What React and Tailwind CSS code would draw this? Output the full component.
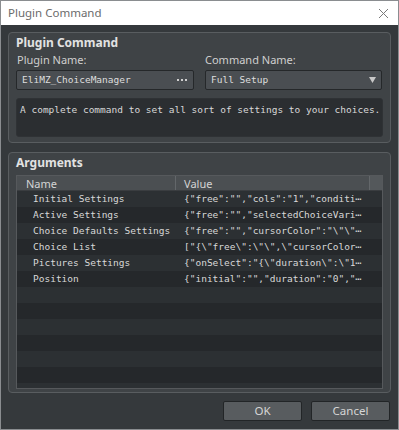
import React from 'react';

const mono = { fontFamily: '"DejaVu Sans Mono", "Liberation Mono", monospace' };

const args = [
  ['Initial Settings', '{"free":"","cols":"1","conditi⋯'],
  ['Active Settings', '{"free":"","selectedChoiceVari⋯'],
  ['Choice Defaults Settings', '{"free":"","cursorColor":"\\"\\"⋯'],
  ['Choice List', '["{\\"free\\":\\"\\",\\"cursorColor⋯'],
  ['Pictures Settings', '{"onSelect":"{\\"duration\\":\\"1⋯'],
  ['Position', '{"initial":"","duration":"0","⋯'],
];

const TOTAL_ROWS = 13;

const App = () => {
  const rows = Array.from({ length: TOTAL_ROWS }, (_, i) => args[i] || ['', '']);

  return (
    <div className="w-[399px] h-[430px] flex flex-col bg-[#35393c] font-['Noto_Sans',sans-serif] overflow-hidden border border-[#8a8d90]">
      {/* title bar */}
      <div className="h-[24px] bg-white flex items-center justify-between pl-[7px] pr-[8px] shrink-0">
        <span className="text-[11.5px] text-[#6b6b6b]">Plugin Command</span>
        <svg width="11" height="11" viewBox="0 0 11 11" className="mr-[1px]">
          <path d="M1 1 L10 10 M10 1 L1 10" stroke="#7a7a7a" strokeWidth="1" />
        </svg>
      </div>

      <div className="flex-1 flex flex-col px-[7px] pt-[7px]">
        {/* Plugin Command group */}
        <div className="h-[111px] rounded-[4px] border border-[#595d60] bg-[#3f4346] px-[7px] pt-[2px] flex flex-col">
          <div className="text-[12px] font-bold text-[#e2e2e2] leading-[16px]">Plugin Command</div>
          <div className="flex gap-[11px] mt-[2px]">
            <div className="w-[178px] flex flex-col">
              <span className="text-[11px] text-[#cfcfcf] leading-[14px] pl-[1px]">Plugin Name:</span>
              <div className="mt-[3px] h-[20px] rounded-[2px] border border-[#25282a] bg-[#4a4e52] flex items-center justify-between px-[5px]">
                <span style={mono} className="text-[9.5px] text-[#dedede]">EliMZ_ChoiceManager</span>
                <span className="flex gap-[2px] pr-[1px]">
                  <span className="w-[2px] h-[2px] bg-[#cfcfcf]" />
                  <span className="w-[2px] h-[2px] bg-[#cfcfcf]" />
                  <span className="w-[2px] h-[2px] bg-[#cfcfcf]" />
                </span>
              </div>
            </div>
            <div className="w-[177px] flex flex-col">
              <span className="text-[11px] text-[#cfcfcf] leading-[14px]">Command Name:</span>
              <div className="mt-[3px] h-[20px] rounded-[2px] border border-[#25282a] bg-[#4a4e52] flex items-center justify-between px-[5px]">
                <span style={mono} className="text-[9.5px] text-[#dedede]">Full Setup</span>
                <svg width="7" height="6" viewBox="0 0 7 6">
                  <path d="M0 0 H7 L3.5 6 Z" fill="#c8c8c8" />
                </svg>
              </div>
            </div>
          </div>
          <div className="mt-[8px] h-[39px] rounded-[3px] border border-[#2f3235] bg-[#2b2e31] px-[3px] pt-[5px]">
            <div style={mono} className="text-[9.5px] leading-[12px] text-[#d8d8d8] whitespace-nowrap">
              A complete command to set all sort of settings to your choices.
            </div>
          </div>
        </div>

        {/* Arguments group */}
        <div className="mt-[9px] h-[241px] rounded-[4px] border border-[#595d60] bg-[#3f4346] px-[7px] pt-[2px] flex flex-col">
          <div className="text-[12px] font-bold text-[#e2e2e2] leading-[16px]">Arguments</div>
          <div className="mt-[4px] flex-1 mb-[3px] border border-[#56595c] bg-[#272a2d] flex flex-col overflow-hidden">
            <div className="h-[15px] bg-[#4b4f52] border-b border-[#3a3d40] flex shrink-0 text-[11px] text-[#d4d4d4] leading-[15px]">
              <div className="w-[159px] pl-[9px] border-r border-[#63676a]">Name</div>
              <div className="w-[194px] pl-[8px] border-r border-[#63676a]">Value</div>
              <div className="flex-1 bg-[#54585b]" />
            </div>
            {rows.map(([name, value], i) => (
              <div
                key={i}
                className={`h-[16px] flex shrink-0 items-center ${i % 2 === 0 ? 'bg-[#2c3033]' : 'bg-[#25282b]'}`}
              >
                <div style={mono} className="w-[159px] pl-[16px] text-[9.5px] text-[#d8d8d8] whitespace-nowrap">{name}</div>
                <div style={mono} className="pl-[8px] text-[9.5px] text-[#d8d8d8] whitespace-nowrap">{value}</div>
              </div>
            ))}
          </div>
        </div>

        {/* buttons */}
        <div className="flex justify-end gap-[9px] mt-[8px] pr-[1px]">
          <button className="w-[79px] h-[20px] rounded-[2px] border border-[#222527] bg-[#585c5f] text-[11.5px] text-[#d6d6d6] leading-none">OK</button>
          <button className="w-[79px] h-[20px] rounded-[2px] border border-[#222527] bg-[#585c5f] text-[11.5px] text-[#d6d6d6] leading-none">Cancel</button>
        </div>
      </div>
    </div>
  );
};

export default App;
